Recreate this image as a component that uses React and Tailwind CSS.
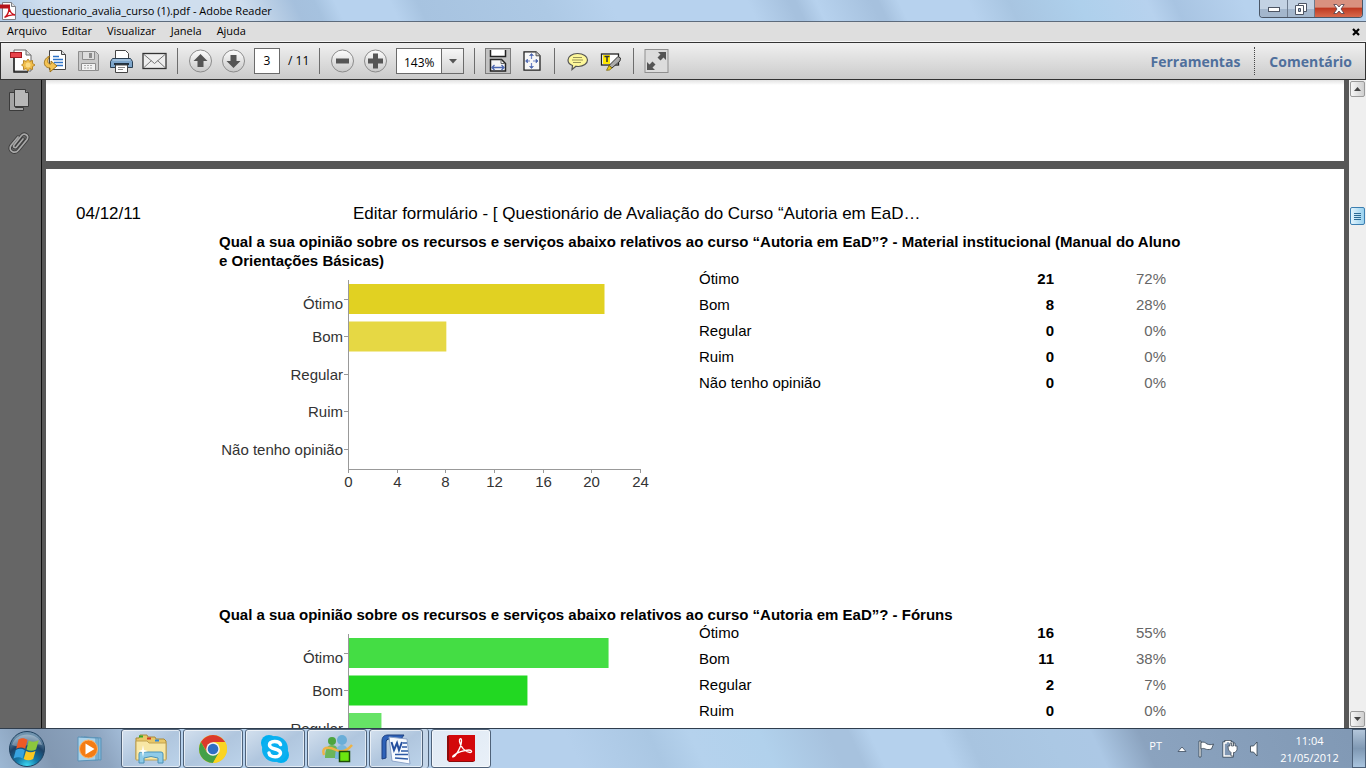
import { useState } from 'react'

const UI = "font-['Open_Sans','Noto_Sans',sans-serif]"
const DOC = "font-['Liberation_Sans',Arial,sans-serif]"

const MENUS = ['Arquivo', 'Editar', 'Visualizar', 'Janela', 'Ajuda']

const LABELS = ['Ótimo', 'Bom', 'Regular', 'Ruim', 'Não tenho opinião']

const QUESTIONS = [
  {
    title: 'Qual a sua opinião sobre os recursos e serviços abaixo relativos ao curso “Autoria em EaD”? - Material institucional (Manual do Aluno e Orientações Básicas)',
    counts: [21, 8, 0, 0, 0],
    percents: [72, 28, 0, 0, 0],
    colors: ['#e1d122', '#e6d844', '#e6d844', '#e6d844', '#e6d844'],
    max: 24,
    step: 4,
  },
  {
    title: 'Qual a sua opinião sobre os recursos e serviços abaixo relativos ao curso “Autoria em EaD”? - Fóruns',
    counts: [16, 11, 2, 0, 0],
    percents: [55, 38, 7, 0, 0],
    colors: ['#44dd44', '#22d822', '#66e366', '#66e366', '#66e366'],
    max: 18,
    step: 3,
  },
]

// ─── Icons ───

function ReaderIcon() {
  return (
    <svg width="16" height="18" viewBox="0 0 16 18">
      <path d="M2.500.500h9l4 4v13h-13z" fill="#fdfdfd" stroke="#7c7f86" />
      <path d="M11.500.500v4h4" fill="#ddd" stroke="#7c7f86" />
      <path d="M0 2.500h10v4H0z" fill="#b5121b" />
      <path d="M4.500 15.500c3-2 4.500-5 4.500-10 1 5 2.500 6.500 6 7.500-4-.5-7.500.5-10.500 2.500z" fill="none" stroke="#c8141c" strokeWidth="1.400" />
    </svg>
  )
}

function CreatePdfIcon() {
  return (
    <svg width="25" height="26" viewBox="0 0 25 26">
      <path d="M4 2h12l5 5v16H4z" fill="#fff" stroke="#666" strokeWidth="1" />
      <path d="M4 9v15h14" fill="none" stroke="#222" strokeWidth="1.500" />
      <path d="M16 2v5h5" fill="#ddd" stroke="#666" />
      <rect x=".5" y="4.500" width="11" height="5" fill="#e8434a" stroke="#a31a20" />
      <path d="M18 11l1.700 2.300 2.800-.8v2.900l2.500 1.600-2.500 1.600v2.900l-2.800-.8L18 23l-1.700-2.300-2.800.8v-2.900L11.500 17l2-1.600v-2.900l2.800.8z" fill="#f0bd4a" stroke="#a87410" strokeWidth=".8" />
      <circle cx="18" cy="17" r="2.500" fill="#fbdc85" />
    </svg>
  )
}

function ShareIcon() {
  return (
    <svg width="25" height="26" viewBox="0 0 25 26">
      <path d="M6.500 2.500h12l4 4v15h-16z" fill="#fff" stroke="#444" />
      <path d="M18.500 2.500v4h4" fill="#ddd" stroke="#444" />
      <path d="M10 8.500h6M10 11.500h10M11 14.500h9M13 17.500h7" stroke="#2f74c8" strokeWidth="1.400" />
      <path d="M7 8C0 10-1 19.500 7 20v4l7-6-6-5v3c-3.500.5-4.500-4-1-8z" fill="#f3c253" stroke="#93680d" strokeWidth=".9" />
    </svg>
  )
}

function SaveIcon() {
  return (
    <svg width="25" height="26" viewBox="0 0 25 26">
      <path d="M2.500 3.500h17l3 3v16h-20z" fill="#c9c9c9" stroke="#8d8d8d" />
      <path d="M6.500 3.500h12v8h-12z" fill="#dedede" stroke="#8d8d8d" />
      <path d="M13 5h3v5h-3z" fill="#8d8d8d" />
      <path d="M5.500 15.500h14v7h-14z" fill="#f2f2f2" stroke="#8d8d8d" />
      <path d="M8 17.500h9M8 20h9" stroke="#aaa" strokeDasharray="2 1" />
    </svg>
  )
}

function PrintIcon() {
  return (
    <svg width="25" height="26" viewBox="0 0 25 26">
      <path d="M6.500 12V2.500h10l3 3V12z" fill="#fff" stroke="#444" />
      <path d="M3.500 10.500h18l2 3v6h-22v-6z" fill="#7ea6cb" stroke="#2b3f52" />
      <path d="M3.500 12h18" stroke="#c0d8ec" />
      <path d="M5 16h15" stroke="#20303f" strokeWidth="2" />
      <path d="M6.500 17h12v7.500h-12z" fill="#fff" stroke="#444" />
      <path d="M9 19.500h7M9 21.500h5" stroke="#888" />
    </svg>
  )
}

function MailIcon() {
  return (
    <svg width="25" height="26" viewBox="0 0 25 26">
      <rect x="1" y="5.500" width="23" height="15" fill="#eee" stroke="#333" strokeWidth="1.300" />
      <path d="M2 6.500l10.500 9L23 6.500M2 19.500l7.500-7M23 19.500l-7.500-7" fill="none" stroke="#777" />
    </svg>
  )
}

function RoundIcon({ d }) {
  return (
    <svg width="25" height="26" viewBox="0 0 25 26">
      <circle cx="12.500" cy="13" r="11" fill="url(#roundFill)" stroke="#8b8b8b" />
      <path d={d} fill="#555" />
    </svg>
  )
}

function FitWidthIcon() {
  return (
    <svg width="18" height="22" viewBox="0 0 18 22">
      <path d="M1.500 0v6.500h15V0" fill="#fff" stroke="#222" strokeWidth="1.500" />
      <path d="M1.500 21V9.500h11l4 4V21z" fill="#f5f5f5" stroke="#222" strokeWidth="1.500" />
      <path d="M12 9.500v4h4" fill="none" stroke="#666" />
      <path d="M4 17.500h10M5.500 15L3 17.500 5.500 20M12.500 15l2.500 2.500-2.500 2.500" fill="none" stroke="#4b66b0" strokeWidth="1.300" />
    </svg>
  )
}

function FitPageIcon() {
  return (
    <svg width="18" height="20" viewBox="0 0 18 20">
      <path d="M1 .8h12l4 4v14.400H1z" fill="#f7f7f7" stroke="#222" strokeWidth="1.300" />
      <path d="M13 .8v4h4" fill="#ccc" stroke="#555" />
      <path d="M8.500 3v5M8.500 12v5M3 10h4M10 10h5" stroke="#6f83c4" strokeWidth="1.200" />
      <path d="M6.500 4.500l2-2 2 2zM6.500 15.500l2 2 2-2zM4.500 8l-2 2 2 2zM13 8l2 2-2 2z" fill="#4b66b0" stroke="#4b66b0" strokeWidth=".6" />
    </svg>
  )
}

function CommentIcon() {
  return (
    <svg width="25" height="26" viewBox="0 0 25 26">
      <path d="M12.500 5.500c6 0 10 3 10 6.500s-4 6.500-9 6.500c-1 0-2 0-2.500-.2L7 21.500 7.500 17.500C4.500 16.500 3 14.300 3 12c0-3.500 4-6.500 9.500-6.500z" fill="#fdf79a" stroke="#555" strokeWidth="1.200" />
      <path d="M8 9.500h9M7 12h11M8 14.500h8" stroke="#97935a" />
    </svg>
  )
}

function HighlightIcon() {
  return (
    <svg width="25" height="26" viewBox="0 0 25 26">
      <rect x="3.500" y="6" width="17" height="11" fill="#fff" stroke="#222" strokeWidth="1.300" />
      <rect x="5" y="7" width="7" height="9" fill="#ffe800" />
      <path d="M6.500 8.500h5M9 8.500V14" stroke="#333" strokeWidth="1.500" />
      <path d="M20 8.500l2.500 1.500-.5 3-8 7-3-2.500z" fill="#aaa" stroke="#333" />
      <path d="M11 17.500l3 2.500-2.500 2-3 .3z" fill="#e8c818" stroke="#7a6610" strokeWidth=".8" />
    </svg>
  )
}

function FullscreenIcon() {
  return (
    <svg width="25" height="26" viewBox="0 0 25 26">
      <rect x="1" y="1.500" width="23" height="23" fill="#dcdcdc" stroke="#8f8f8f" />
      <path d="M22 4v8l-2.500-2.500-3 3-3-3 3-3L14 4zM3 22v-8l2.500 2.500 3-3 3 3-3 3L11 22z" fill="#555" />
    </svg>
  )
}

function PagesIcon() {
  return (
    <svg width="22" height="24" viewBox="0 0 22 24">
      <path d="M1.500 4.500h6v15h8v3h-14z" fill="#a5a5a5" stroke="#3b3b3b" />
      <path d="M6.500 1.500h11l3 3v14h-14z" fill="#b7b7b7" stroke="#3b3b3b" />
      <path d="M17.500 1.500v3h3" fill="#8a8a8a" stroke="#3b3b3b" />
    </svg>
  )
}

const CLIP = 'M15 8l-6.500 8c-1.300 1.800-4 0-2.500-2L13.500 4.500c2.500-3 8-.5 5.500 4L10.500 19c-3.500 4.500-11 1-7.500-4.500L10 6'

function ClipIcon() {
  return (
    <svg width="22" height="24" viewBox="0 0 22 24">
      <path d={CLIP} fill="none" stroke="#3d3d3d" strokeWidth="3.400" strokeLinecap="round" />
      <path d={CLIP} fill="none" stroke="#a8a8a8" strokeWidth="1.700" strokeLinecap="round" />
    </svg>
  )
}

function StartOrb() {
  return (
    <svg width="38" height="38" viewBox="0 0 38 38">
      <defs>
        <radialGradient id="orb" cx=".5" cy="1" r=".9">
          <stop offset="0" stopColor="#3fe0f8" />
          <stop offset=".35" stopColor="#1579a8" />
          <stop offset=".7" stopColor="#1c4166" />
          <stop offset="1" stopColor="#6f93ae" />
        </radialGradient>
      </defs>
      <circle cx="19" cy="19" r="17.500" fill="url(#orb)" stroke="#20415f" />
      <path d="M4 15C8 1 30 1 34 15c-9-3-21 4-30 0z" fill="#fff" opacity=".3" />
      <path d="M10.500 9.500c3.500-2 6-1.500 9 .3l-2.300 9c-3-1.700-5.700-1.500-9 0z" fill="#ee5a24" />
      <path d="M20.800 10.500c3.500 1.700 6.500 1.700 10-.5l-2.800 9.500c-3.500 1.700-6.500 1.500-9.500 0z" fill="#8cc63e" />
      <path d="M7.800 20c3.300-1.700 6-1.500 9 .2l-2.200 8.300c-3-1.700-5.700-1.500-9 0z" fill="#38a3e0" />
      <path d="M18 21c3.500 1.700 6 1.500 9.500 0l-2.300 8c-3.200 1.700-6.700 1.500-9.500 0z" fill="#fcc822" />
    </svg>
  )
}

function MediaIcon() {
  return (
    <svg width="32" height="30" viewBox="0 0 32 30">
      <path d="M8 3l17 1v22l-17-1z" fill="#7fb6d8" stroke="#5b93b8" />
      <path d="M5 3l17 1v22L5 26z" fill="#9cc9e4" stroke="#5b93b8" />
      <path d="M2 3l18 1v22L2 27z" fill="#a9d2ea" stroke="#5b93b8" />
      <circle cx="12.500" cy="15" r="9" fill="#f57c14" stroke="#fbb36a" />
      <path d="M9.500 9.500v11l9-5.500z" fill="#fff" />
    </svg>
  )
}

function ExplorerIcon() {
  return (
    <svg width="34" height="32" viewBox="0 0 34 32">
      <path d="M2 5h3l1-3h7l1 2h7l1 2h8l2 2v18H2z" fill="#e9c868" stroke="#a98a3a" />
      <path d="M5 2.500h4v2H5z" fill="#35a829" />
      <path d="M13 4.500h4v2h-4z" fill="#d33a22" />
      <path d="M21 6.500h4v2h-4z" fill="#2c86d8" />
      <path d="M2 8h11l2 2h17v17H2z" fill="#f8e7a5" stroke="#c2a352" />
      <path d="M5 30V21q0-2 2-2h20q2 0 2 2v9h-5v-5q-7-3-14 0v5z" fill="#8fcbe8" stroke="#4a92b8" />
      <path d="M9 12l1 5 4 1-4 1-1 5-1-5-4-1 4-1z" fill="#fff" />
    </svg>
  )
}

function ChromeIcon() {
  return (
    <svg width="30" height="30" viewBox="0 0 30 30">
      <circle cx="15" cy="15" r="14" fill="#f7cf1d" />
      <path d="M15 8h12.100A14 14 0 0 0 2.900 8L9 18z" fill="#db3a2c" />
      <path d="M2.900 8A14 14 0 0 0 15 29l6-10.500-12 0z" fill="#43a047" />
      <path d="M15 29A14 14 0 0 0 27.100 8H15l6 10.500z" fill="#fad423" />
      <circle cx="15" cy="15" r="6.800" fill="#f3f3f3" />
      <circle cx="15" cy="15" r="5.300" fill="#2f6fc4" />
    </svg>
  )
}

function SkypeIcon() {
  return (
    <svg width="30" height="30" viewBox="0 0 30 30">
      <circle cx="9" cy="9" r="8" fill="#00aff0" />
      <circle cx="21" cy="21" r="8" fill="#00aff0" />
      <circle cx="15" cy="15" r="13" fill="#0bb0f0" />
      <path d="M20.500 10.500C19 6.500 9.500 6.500 9.500 11c0 5 11 3 11 8 0 5-10.500 5-11.500 0" fill="none" stroke="#fff" strokeWidth="3.500" strokeLinecap="round" />
    </svg>
  )
}

function MessengerIcon() {
  return (
    <svg width="34" height="30" viewBox="0 0 34 30">
      <circle cx="12" cy="7" r="4" fill="#4da53f" />
      <path d="M5 24c0-9 2-13 7-13s6 3 6 13z" fill="#6bb55a" />
      <circle cx="22" cy="6" r="5" fill="#6aaed8" />
      <path d="M15 25c0-9 2-14 7-14s7 5 7 14z" fill="#79b7de" />
      <path d="M4 21c-3-8 4-9 12-5 6 3 11 1 16-5" fill="none" stroke="#eeb345" strokeWidth="2.500" />
      <rect x="19.500" y="17.500" width="10" height="10" fill="#6be610" stroke="#1c4d08" strokeWidth="1.500" />
    </svg>
  )
}

function WordIcon() {
  return (
    <svg width="32" height="32" viewBox="0 0 32 32">
      <path d="M2 26V8c0-4 2-6 6-6h16l-3 4H10c-3 0-4 1-4 4v15z" fill="#2e62b8" stroke="#1c3f80" />
      <path d="M9 4l18 2 3 25-18-3z" fill="#f7faff" stroke="#8da4c8" />
      <path d="M11.500 9l2.500 8 3-7 2 7 3-8" fill="none" stroke="#254f9e" strokeWidth="2" />
      <path d="M23 10h4M22 14h5M21 18h7M15 21.500h13M15 25l13 1" stroke="#2e5aa5" strokeWidth="1.700" />
    </svg>
  )
}

function AcrobatIcon() {
  return (
    <svg width="30" height="29" viewBox="0 0 30 29">
      <path d="M1 2l2-1h26v26l-2 1H3l-2-2z" fill="#8d0b0b" />
      <path d="M3 1h26v26H3z" fill="#d3080b" />
      <path d="M7 23c3-1 9-11 8.500-17-.3-2.500-2.500-1-2 1.500C14.500 13 19 18 24 18.500c2.500 0 2-2.500-1-2.500-5 0-12 2.500-15.500 5.500-1 1-1 1.500-.5 1.500z" fill="none" stroke="#fff" strokeWidth="1.300" />
    </svg>
  )
}

// ─── Window chrome ───

function TitleBar() {
  return (
    <header className="flex h-[22px] shrink-0 items-start justify-between border-b border-[#5d6b7c] bg-[linear-gradient(65deg,#b4cce6_0%,#cfdeee_4%,#cfdeee_18%,#a5c0dd_22%,#a6c2df_23.5%,#b7d2ee_25%,#b7d2ee_29%,#a7c3e0_31%,#adc9e5_40%,#b7d2ee_45%,#b7d2ee_55%,#a6c1de_58%,#a6c1de_58.5%,#b7d2ee_60%,#a6c1de_64%,#a6c1de_64.5%,#b7d2ee_66%,#b7d2ee_71%,#a8c5e1_74%,#aed0ec_79%,#b7d2ee_84%,#a8c4e2_86%,#b7d2ee_91%)]">
      <div className="flex items-center gap-[6px] pt-[2px]">
        <ReaderIcon />
        <h1 className="text-[11px] leading-[18px] text-black">questionario_avalia_curso (1).pdf - Adobe Reader</h1>
      </div>
      <div className="mr-[3px] flex h-[18px] overflow-hidden rounded-b-[4px] border border-t-0 border-[#4a5666]">
        <button aria-label="Minimizar" className="flex w-7 items-center justify-center border-r border-[#6c7a8c] bg-gradient-to-b from-[#c3d2e3] from-50% to-[#a3b6cc] to-55%">
          <svg width="12" height="6" viewBox="0 0 12 6"><rect x=".5" y="1.500" width="11" height="4" fill="#fff" stroke="#4d5564" /></svg>
        </button>
        <button aria-label="Restaurar" className="flex w-[27px] items-center justify-center border-r border-[#6c7a8c] bg-gradient-to-b from-[#c3d2e3] from-50% to-[#a3b6cc] to-55%">
          <svg width="12" height="12" viewBox="0 0 12 12"><path d="M3.500.500h8v8h-8z" fill="#fff" stroke="#4d5564" /><path d="M.5 2.500h8v9h-8z" fill="#fff" stroke="#4d5564" /><path d="M3.500 5.500h2v3h-2z" fill="#a3b6cc" stroke="#4d5564" /></svg>
        </button>
        <button aria-label="Fechar" className="flex w-[47px] items-center justify-center bg-gradient-to-b from-[#d9917f] from-40% via-[#bf3a22] via-50% to-[#d8694c]">
          <svg width="12" height="10" viewBox="0 0 12 10"><path d="M.8.500h3L6 3 8.200.500h3L8 5l3.200 4.500h-3L6 7 3.800 9.500h-3L4 5z" fill="#fff" stroke="#4d3f4c" strokeWidth=".8" /></svg>
        </button>
      </div>
    </header>
  )
}

function MenuBar() {
  return (
    <nav className="flex h-5 shrink-0 items-start justify-between border-b border-[#f4f4f4] bg-[#dedede] pr-[6px] pl-[7px]">
      <div className="flex gap-[15px]">
        {MENUS.map(m => (
          <button key={m} className="text-[11px] leading-[18px] text-black">{m}</button>
        ))}
      </div>
      <button aria-label="Fechar documento" className="flex h-[19px] items-center">
        <svg width="8" height="8" viewBox="0 0 8 8"><path d="M1 1l6 6M7 1L1 7" stroke="#000" strokeWidth="2.200" /></svg>
      </button>
    </nav>
  )
}

const Sep = () => <div className="mx-[10px] h-[26px] w-px bg-[#6d6d6d]" />

function Tool({ label, children }) {
  return <button aria-label={label} className="flex w-[25px] items-center justify-center">{children}</button>
}

function Toolbar() {
  const [page, setPage] = useState('3')
  const [zoom, setZoom] = useState('143%')
  return (
    <div className="flex h-[38px] shrink-0 items-center justify-between border border-[#333] bg-gradient-to-b from-[#f0f0f0] to-[#cbcbcb] pr-[13px] pl-[9px]">
      <svg width="0" height="0" className="absolute">
        <defs>
          <linearGradient id="roundFill" x1="0" y1="0" x2="0" y2="1">
            <stop offset="0" stopColor="#fdfdfd" />
            <stop offset="1" stopColor="#c8c8c8" />
          </linearGradient>
        </defs>
      </svg>
      <div className="flex items-center">
        <div className="flex items-center gap-2">
          <Tool label="Criar PDF"><CreatePdfIcon /></Tool>
          <Tool label="Compartilhar"><ShareIcon /></Tool>
          <Tool label="Salvar"><SaveIcon /></Tool>
          <Tool label="Imprimir"><PrintIcon /></Tool>
          <Tool label="Enviar por e-mail"><MailIcon /></Tool>
        </div>
        <Sep />
        <div className="flex items-center gap-2">
          <Tool label="Página anterior"><RoundIcon d="M12.500 6l7 7h-4v6h-6v-6h-4z" /></Tool>
          <Tool label="Próxima página"><RoundIcon d="M12.500 20l7-7h-4V7h-6v6h-4z" /></Tool>
          <input
            aria-label="Página"
            value={page}
            onChange={e => setPage(e.target.value)}
            className="h-[26px] w-[26px] border border-[#6b6b6b] bg-white pb-px text-center text-[12px] text-black"
          />
          <span className="w-[21px] text-[12px] whitespace-nowrap text-black">/ 11</span>
        </div>
        <Sep />
        <div className="flex items-center gap-2">
          <Tool label="Menos zoom"><RoundIcon d="M6 10.500h13v5H6z" /></Tool>
          <Tool label="Mais zoom"><RoundIcon d="M10 5.500h5v5h5v5h-5v5h-5v-5H5v-5h5z" /></Tool>
          <div className="relative h-[26px] w-[68px] border border-[#6b6b6b] bg-white">
            <select
              aria-label="Zoom"
              value={zoom}
              onChange={e => setZoom(e.target.value)}
              className="h-full w-full appearance-none pb-[2px] pl-[7px] text-[12px] text-black"
            >
              <option>100%</option>
              <option>143%</option>
              <option>200%</option>
            </select>
            <span className="pointer-events-none absolute inset-y-0 right-0 flex w-[22px] items-center justify-center border-l border-[#6b6b6b] bg-gradient-to-b from-[#f7f7f7] to-[#d4d4d4]">
              <svg width="8" height="5" viewBox="0 0 8 5"><path d="M0 0h8L4 4.500z" fill="#555" /></svg>
            </span>
          </div>
        </div>
        <Sep />
        <div className="flex items-center gap-2">
          <button aria-label="Ajustar à largura" className="flex h-[26px] w-[26px] items-center justify-center border border-[#7c7c7c] bg-[#c2c2c2]"><FitWidthIcon /></button>
          <Tool label="Página inteira"><FitPageIcon /></Tool>
        </div>
        <Sep />
        <div className="flex items-center gap-2">
          <Tool label="Nota"><CommentIcon /></Tool>
          <Tool label="Realçar texto"><HighlightIcon /></Tool>
        </div>
        <Sep />
        <Tool label="Tela cheia"><FullscreenIcon /></Tool>
      </div>
      <div className="flex items-center text-[14px] font-bold text-[#4f6f9c]">
        <button>Ferramentas</button>
        <div className="mx-[14px] h-7 border-l border-dotted border-[#444]" />
        <button>Comentário</button>
      </div>
    </div>
  )
}

function Sidebar() {
  return (
    <aside className="flex w-[42px] shrink-0 flex-col items-start gap-[19px] border-r border-[#111] bg-[#666] pt-2 pl-2">
      <button aria-label="Miniaturas"><PagesIcon /></button>
      <button aria-label="Anexos"><ClipIcon /></button>
    </aside>
  )
}

// ─── Document ───

function BarChart({ counts, colors, max, step }) {
  const axisX = 129
  const width = 292
  const ticks = []
  for (let v = 0; v <= max; v += step) ticks.push(v)
  return (
    <svg width="450" height="222" viewBox="0 0 450 222" className={DOC}>
      {counts.map((c, i) => (
        <g key={i}>
          {c > 0 && <rect x={axisX} y={14 + i * 37.500} width={(c / max) * width + 1} height="30" fill={colors[i]} />}
          <path d={`M${axisX - 4} ${Math.round(29 + i * 37.400) + 0.500}h4`} stroke="#999" />
          <text x="124" y={Math.round((i === 0 ? 38.500 : 35) + i * 37.400)} textAnchor="end" fontSize="15" fill="#333">{LABELS[i]}</text>
        </g>
      ))}
      <path d={`M${axisX + 0.500} 10v189.500h${width}`} fill="none" stroke="#999" />
      {ticks.map(v => {
        const x = Math.round(axisX + (v / max) * width) + 0.500
        return (
          <g key={v}>
            <path d={`M${x} 199v4`} stroke="#999" />
            <text x={x} y="217" textAnchor="middle" fontSize="15" fill="#333">{v}</text>
          </g>
        )
      })}
    </svg>
  )
}

function Question({ q }) {
  return (
    <section className="pb-[113px]">
      <h2 className="-mr-6 text-[15px] leading-[19px] font-bold text-black">{q.title}</h2>
      <div className="flex items-start justify-between">
        <BarChart counts={q.counts} colors={q.colors} max={q.max} step={q.step} />
        <table className="w-[467px] text-[15px] leading-[18px]">
          <tbody>
            {LABELS.map((label, i) => (
              <tr key={label}>
                <th scope="row" className="pb-2 text-left font-normal text-black">{label}</th>
                <td className="w-20 pb-2 text-right font-bold text-black">{q.counts[i]}</td>
                <td className="w-28 pb-2 text-right text-[#666]">{q.percents[i]}%</td>
              </tr>
            ))}
          </tbody>
        </table>
      </div>
    </section>
  )
}

function DocumentView() {
  return (
    <main className={`min-w-0 flex-1 overflow-hidden bg-[#575757] pr-[5px] pl-1 ${DOC}`}>
      <div className="h-[81px] bg-white bg-gradient-to-b from-[#e2e2e2] to-white to-[5px]" />
      <article className="mt-2 bg-white pt-[34px] pr-[178px] pl-[30px]">
        <div className="flex text-[17px] leading-[22px] text-black">
          <span className="w-[277px]">04/12/11</span>
          <span>Editar formulário - [ Questionário de Avaliação do Curso “Autoria em EaD…</span>
        </div>
        <div className="mt-[7px] pl-[143px]">
          {QUESTIONS.map(q => <Question key={q.title} q={q} />)}
        </div>
      </article>
    </main>
  )
}

function Scrollbar() {
  const btn = 'flex h-4 w-[15px] items-center justify-center rounded-[2px] border border-[#9a9a9a] bg-gradient-to-r from-[#f6f6f6] to-[#cfcfcf]'
  return (
    <div className="flex w-[17px] shrink-0 flex-col items-center bg-[#efefef] py-px">
      <button aria-label="Rolar para cima" className={btn}>
        <svg width="7" height="4" viewBox="0 0 7 4"><path d="M0 4h7L3.500 0z" fill="#444" /></svg>
      </button>
      <div className="flex-1 pt-[110px]">
        <div className="flex h-[18px] w-[15px] flex-col items-center justify-center gap-px rounded-[2px] border border-[#3c7fb1] bg-gradient-to-r from-[#e3f4fc] to-[#98d1ef]">
          <span className="h-px w-[7px] bg-[#2b6a94]" />
          <span className="h-px w-[7px] bg-[#2b6a94]" />
          <span className="h-px w-[7px] bg-[#2b6a94]" />
          <span className="h-px w-[7px] bg-[#2b6a94]" />
        </div>
      </div>
      <button aria-label="Rolar para baixo" className={btn}>
        <svg width="7" height="4" viewBox="0 0 7 4"><path d="M0 0h7L3.500 4z" fill="#444" /></svg>
      </button>
    </div>
  )
}

// ─── Taskbar ───

function TaskButton({ label, active, children }) {
  return (
    <button
      aria-label={label}
      className={`flex h-[39px] w-[60px] items-center justify-center rounded-[3px] border border-[#4f6279] inset-ring inset-ring-white/60 ${
        active ? 'bg-gradient-to-br from-[#dfe9f4] to-[#e9f0f8]' : 'bg-gradient-to-br from-[#d3e0ee] via-[#b0c6de] to-[#bcd3ea]'
      }`}
    >
      {children}
    </button>
  )
}

function Taskbar() {
  return (
    <footer className="flex h-10 shrink-0 justify-between border-t border-[#2f3d4d] bg-[linear-gradient(65deg,#9db8d4_0%,#8298b2_4%,#8ea5c0_8%,#b5d0ec_12%,#b5d0ec_42%,#aac7e3_48%,#b5d2ed_51%,#b1d1ec_56%,#a7c2de_61%,#a7c2de_62.5%,#b5d1ed_64%,#b5d1ed_69%,#a8c4e0_71%,#abc8e4_77%,#acc8e5_80%,#8ba3bf_83.5%,#8098b4_100%)]">
      <div className="flex items-center">
        <button aria-label="Iniciar" className="pl-2"><StartOrb /></button>
        <button aria-label="Windows Media Player" className="flex w-[75px] items-center justify-center pl-4"><MediaIcon /></button>
        <div className="flex gap-[2px]">
          <TaskButton label="Windows Explorer"><ExplorerIcon /></TaskButton>
          <TaskButton label="Google Chrome"><ChromeIcon /></TaskButton>
          <TaskButton label="Skype"><SkypeIcon /></TaskButton>
          <TaskButton label="Windows Live Messenger"><MessengerIcon /></TaskButton>
          {/* several Word windows are open, so the button gets a stacked edge */}
          <div className="flex rounded-r-[3px] border-r border-[#4f6279] bg-[#c3d5e8]">
            <button aria-label="Microsoft Word" className="flex h-[39px] w-[54px] items-center justify-center rounded-[3px] border border-[#4f6279] bg-gradient-to-br from-[#d3e0ee] via-[#b0c6de] to-[#bcd3ea] inset-ring inset-ring-white/60"><WordIcon /></button>
            <span className="w-[5px]" />
          </div>
          <TaskButton label="Adobe Reader" active><AcrobatIcon /></TaskButton>
        </div>
      </div>
      <div className="flex items-center text-white">
        <span className="pb-1 text-[11px]">PT</span>
        <button aria-label="Mostrar ícones ocultos" className="ml-[15px]">
          <svg width="10" height="6" viewBox="0 0 10 6"><path d="M1 5.500h8L5 1z" fill="#fff" stroke="#3d4d60" strokeWidth=".8" /></svg>
        </button>
        <div className="ml-[11px] flex items-center gap-2">
          <svg width="16" height="18" viewBox="0 0 16 18">
            <path d="M1 1h2v16H1z" fill="#fff" stroke="#33414f" strokeWidth=".8" />
            <path d="M3 2.500c3-1 4 0 6 1.500 2 .8 4 1 6.500 0L13.500 9c-3 1-5 .5-6 0S5 8 3 9z" fill="#fff" stroke="#33414f" strokeWidth=".8" />
          </svg>
          <svg width="16" height="18" viewBox="0 0 16 18">
            <path d="M4 3V1.500h4V3h2v13H2V3z" fill="#8097b3" stroke="#33414f" strokeWidth="3" />
            <path d="M4 3V1.500h4V3h2v13H2V3z" fill="#8097b3" stroke="#fff" strokeWidth="1.500" />
            <path d="M6 6h2V3h1.500v3h2V3H13v3h2v4l-2 2.500h-1.500V16H9v-3.500L6.500 10z" fill="#fff" stroke="#33414f" strokeWidth=".7" />
          </svg>
          <svg width="16" height="18" viewBox="0 0 16 18"><path d="M4.500 6h3L11 2v14l-3.500-4h-3z" fill="#fff" stroke="#33414f" strokeWidth=".8" /></svg>
        </div>
        <div className="w-[90px] pl-[5px] text-center text-[11px] leading-[17px]">
          <div>11:04</div>
          <div>21/05/2012</div>
        </div>
        <button aria-label="Mostrar área de trabalho" className="h-full w-[14px] border border-[#4c6078] bg-gradient-to-b from-[#b3c6da] via-[#7f98b3] to-[#a9c4de]" />
      </div>
    </footer>
  )
}

export default function App() {
  return (
    <div className={`flex h-screen flex-col overflow-hidden bg-[#575757] ${UI}`}>
      <TitleBar />
      <MenuBar />
      <Toolbar />
      <div className="flex min-h-0 flex-1">
        <Sidebar />
        <DocumentView />
        <Scrollbar />
      </div>
      <Taskbar />
    </div>
  )
}
